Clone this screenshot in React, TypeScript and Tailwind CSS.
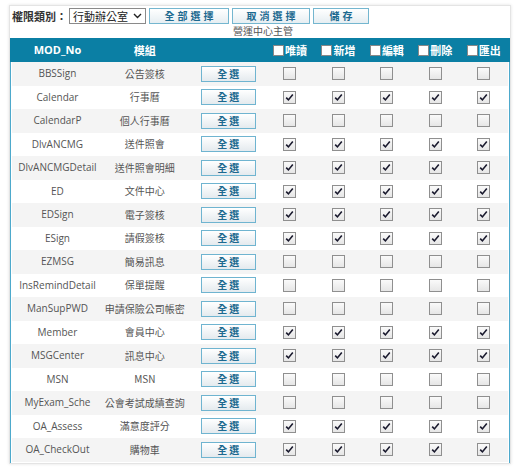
import React from "react";

const rows: [string, string, boolean][] = [
  ["BBSSign", "公告簽核", false],
  ["Calendar", "行事曆", true],
  ["CalendarP", "個人行事曆", false],
  ["DlvANCMG", "送件照會", true],
  ["DlvANCMGDetail", "送件照會明細", true],
  ["ED", "文件中心", true],
  ["EDSign", "電子簽核", true],
  ["ESign", "請假簽核", true],
  ["EZMSG", "簡易訊息", false],
  ["InsRemindDetail", "保單提醒", false],
  ["ManSupPWD", "申請保險公司帳密", false],
  ["Member", "會員中心", true],
  ["MSGCenter", "訊息中心", true],
  ["MSN", "MSN", false],
  ["MyExam_Sche", "公會考試成績查詢", false],
  ["OA_Assess", "滿意度評分", true],
  ["OA_CheckOut", "購物車", true],
];

const perms = ["唯讀", "新增", "編輯", "刪除", "匯出"];

const font = { fontFamily: '"Open Sans", "Noto Sans CJK TC", sans-serif' };
const cjk = { fontFamily: '"Noto Sans CJK TC", sans-serif' };

function Box({ checked }: { checked: boolean }) {
  return (
    <span className="inline-flex h-[13px] w-[13px] items-center justify-center border border-[#8f8f8f] bg-gradient-to-b from-[#fafafa] to-[#e6e6e6]">
      {checked && (
        <svg width="9" height="9" viewBox="0 0 9 9">
          <path d="M1.2 4.6 L3.4 6.9 L7.8 1.4" fill="none" stroke="#1a1a2e" strokeWidth="1.6" />
        </svg>
      )}
    </span>
  );
}

function TopBtn({ label, w }: { label: string; w: string }) {
  return (
    <div
      className={`${w} flex h-[16px] items-center justify-center border border-[#74b6cf] bg-gradient-to-b from-[#ffffff] to-[#e6eef2] pl-[3px] text-[10px] font-bold leading-none tracking-[3px] text-[#1d6a90]`}
      style={cjk}
    >
      {label}
    </div>
  );
}

export default function App() {
  return (
    <div className="min-h-[470px] bg-white" style={font}>
      <div className="ml-[9px] mt-[5px] w-[502px] border border-[#e4e4e4] bg-white shadow-[0_0_3px_rgba(0,0,0,0.12)]">
        <div className="flex h-[18px] items-start pl-[2px] pt-[2px]">
          <span className="text-[11px] font-bold leading-[16px] text-[#333]" style={cjk}>
            權限類別：
          </span>
          <div
            className="ml-[2px] flex h-[16px] w-[77px] items-center justify-between border border-[#8a8a8a] bg-white pl-[3px] pr-[3px] text-[11px] leading-none text-[#222]"
            style={cjk}
          >
            <span>行動辦公室</span>
            <svg width="9" height="6" viewBox="0 0 9 6">
              <path d="M1 1 L4.5 4.5 L8 1" fill="none" stroke="#222" strokeWidth="1.4" />
            </svg>
          </div>
          <div className="ml-[3px] flex gap-[3px]">
            <TopBtn label="全部選擇" w="w-[80px]" />
            <TopBtn label="取消選擇" w="w-[78px]" />
            <TopBtn label="儲存" w="w-[56px]" />
          </div>
        </div>
        <div className="h-[14px] pl-[6px] text-center text-[10px] leading-[14px] text-[#555]" style={cjk}>
          營運中心主管
        </div>
        <div className="flex h-[24px] items-center bg-[#0b7fa4] px-[2px] text-[11px] font-bold text-white">
          <div className="w-[91px] text-center">MOD_No</div>
          <div className="w-[84px] text-center" style={cjk}>
            模組
          </div>
          <div className="w-[79px]" />
          {perms.map((p) => (
            <div key={p} className="flex w-[48.5px] items-center justify-center gap-[1px]">
              <span className="h-[11px] w-[11px] border border-[#888] bg-white" />
              <span style={cjk}>{p}</span>
            </div>
          ))}
        </div>
        <div className="border-x border-[#4da9cc] px-[1px] pb-[1px]">
          {rows.map(([mod, name, on], i) => (
            <div
              key={mod}
              className={`flex h-[23.5px] items-center text-[10px] text-[#555] ${i % 2 === 0 ? "bg-[#f4f4f4]" : "bg-white"}`}
            >
              <div className="w-[91px] whitespace-nowrap text-center">{mod}</div>
              <div className="w-[84px] whitespace-nowrap text-center leading-none" style={cjk}>
                {name}
              </div>
              <div className="flex w-[79px] justify-center pl-[4px]">
                <div
                  className="flex h-[16px] w-[55px] items-center justify-center border border-[#6fb4d0] bg-gradient-to-b from-[#ffffff] to-[#e4eaee] pl-[2px] text-[10px] font-bold leading-none tracking-[2px] text-[#1d6a90]"
                  style={cjk}
                >
                  全選
                </div>
              </div>
              {perms.map((p) => (
                <div key={p} className="flex w-[48.5px] justify-center">
                  <Box checked={on} />
                </div>
              ))}
            </div>
          ))}
        </div>
      </div>
    </div>
  );
}
